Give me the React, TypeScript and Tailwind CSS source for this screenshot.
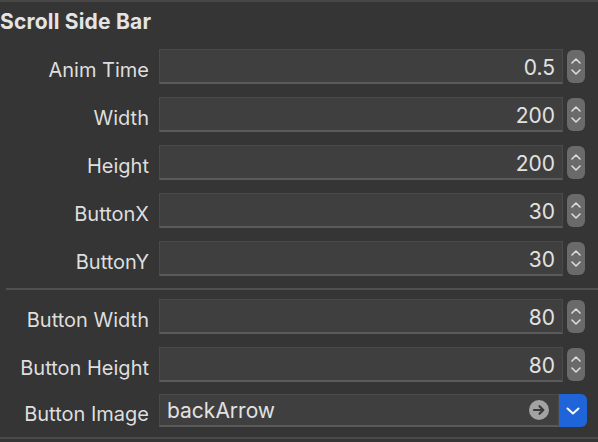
import React from 'react';

const ROWS_A = [
  { label: 'Anim Time', value: '0.5' },
  { label: 'Width', value: '200' },
  { label: 'Height', value: '200' },
  { label: 'ButtonX', value: '30' },
  { label: 'ButtonY', value: '30' },
];

const ROWS_B = [
  { label: 'Button Width', value: '80' },
  { label: 'Button Height', value: '80' },
];

const Stepper = () => (
  <div className="w-[18px] h-[33px] rounded-[6px] bg-[#6a6a6a] flex flex-col items-center justify-center gap-[5px]">
    <svg width="10" height="6" viewBox="0 0 10 6" fill="none">
      <path d="M1 5 L5 1 L9 5" stroke="#dcdcdc" strokeWidth="1.6" strokeLinecap="round" strokeLinejoin="round" />
    </svg>
    <svg width="10" height="6" viewBox="0 0 10 6" fill="none">
      <path d="M1 1 L5 5 L9 1" stroke="#dcdcdc" strokeWidth="1.6" strokeLinecap="round" strokeLinejoin="round" />
    </svg>
  </div>
);

const NumberRow = ({ label, value }: { label: string; value: string }) => (
  <div className="flex items-center h-[35px]">
    <div className="w-[149px] text-right text-[20px] text-[#dedede] pt-[6px] whitespace-nowrap">{label}</div>
    <div className="ml-[10px] flex-1 h-[35px] bg-[#3f3f3f] border border-[#4a4a4a] border-b-2 border-b-[#5a5a5a] flex items-center justify-end pr-[7px] pt-[3px] text-[21px] text-[#e2e2e2]">
      {value}
    </div>
    <div className="ml-[4px] mr-[13px]">
      <Stepper />
    </div>
  </div>
);

export default function App() {
  return (
    <div className="w-[598px] h-[442px] overflow-hidden bg-[#353535] font-['Inter','Liberation_Sans',sans-serif] border-t-2 border-[#474747]">
      <div className="h-[47px] pt-[7px] text-[21px] font-bold text-[#e4e4e4] leading-[26px] tracking-[0.2px]">Scroll Side Bar</div>
      <div className="flex flex-col gap-[13px]">
        {ROWS_A.map(r => <NumberRow key={r.label} {...r} />)}
      </div>
      <div className="ml-[6px] mt-[12px] mb-[9px] h-[2px] bg-[#515151]" />
      <div className="flex flex-col gap-[13px]">
        {ROWS_B.map(r => <NumberRow key={r.label} {...r} />)}
        <div className="flex items-center h-[33px] -mt-[1px]">
          <div className="w-[149px] text-right text-[20px] text-[#dedede] pt-[6px] whitespace-nowrap">Button Image</div>
          <div className="ml-[10px] flex-1 h-[33px] bg-[#3f3f3f] border border-[#4a4a4a] border-b-2 border-b-[#5a5a5a] flex items-center pl-[7px] pr-[9px] pt-[2px] text-[21px] text-[#e2e2e2]">
            <span className="flex-1">backArrow</span>
            <svg width="20" height="20" viewBox="0 0 20 20" className="-mt-[2px]">
              <circle cx="10" cy="10" r="10" fill="#a3a3a3" />
              <path d="M5 10 H14 M10.5 6.2 L14.3 10 L10.5 13.8" stroke="#3a3a3a" strokeWidth="2.2" fill="none" strokeLinecap="round" strokeLinejoin="round" />
            </svg>
          </div>
          <div className="w-[28px] h-[33px] mr-[11px] bg-[#1f64d9] rounded-r-[6px] flex items-center justify-center">
            <svg width="14" height="8" viewBox="0 0 14 8" fill="none">
              <path d="M1.5 1.5 L7 6.5 L12.5 1.5" stroke="#ffffff" strokeWidth="2" strokeLinecap="round" strokeLinejoin="round" />
            </svg>
          </div>
        </div>
      </div>
      <div className="mt-[10px] h-[2px] bg-[#4a4a4a]" />
    </div>
  );
}
